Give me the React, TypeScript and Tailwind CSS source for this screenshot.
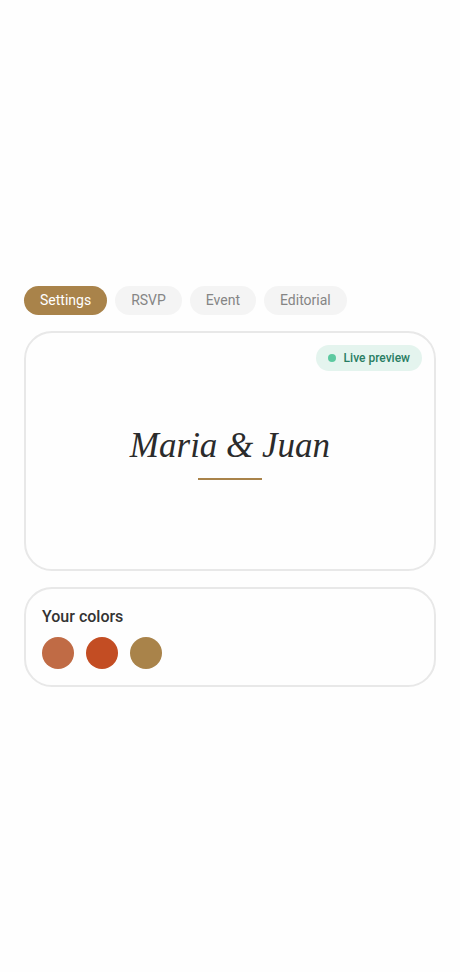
import { useState } from "react";

const tabs = ["Settings", "RSVP", "Event", "Editorial"];

const colors = [
  { name: "Terracotta", fill: "bg-[#c06b45]" },
  { name: "Burnt orange", fill: "bg-[#c34d23]" },
  { name: "Antique gold", fill: "bg-[#a9834a]" },
];

export default function App() {
  const [active, setActive] = useState("Settings");

  return (
    <main className="flex min-h-screen flex-col justify-center gap-4 bg-[#fefefe] px-6 font-['Roboto',sans-serif]">
      <nav className="flex flex-wrap gap-2">
        {tabs.map((tab) => (
          <button
            key={tab}
            type="button"
            aria-pressed={tab === active}
            onClick={() => setActive(tab)}
            className={
              tab === active
                ? "h-[29px] rounded-full bg-[#a9834a] px-4 text-sm text-white"
                : "h-[29px] rounded-full bg-[#f4f4f4] px-4 text-sm text-[#858585]"
            }
          >
            {tab}
          </button>
        ))}
      </nav>

      <section className="relative flex min-h-60 flex-col items-center justify-center gap-2 rounded-[28px] border-2 border-[#e8e8e8]">
        <div className="absolute top-3 right-3 flex h-[26px] items-center gap-2 rounded-full bg-[#e4f4ee] px-3 text-xs font-medium text-[#287d63]">
          <span className="size-2 rounded-full bg-[#5cc9a0]" />
          Live preview
        </div>
        <h1 className="font-['Liberation_Serif',serif] text-[35px] leading-12 text-[#2b2b2b] italic">
          Maria &amp; Juan
        </h1>
        <div className="h-0.5 w-16 bg-[#a9834a]" />
      </section>

      <section className="flex flex-col gap-2 rounded-[28px] border-2 border-[#e8e8e8] p-4">
        <h2 className="text-base font-medium text-[#333333]">Your colors</h2>
        <div className="flex gap-3">
          {colors.map((color) => (
            <button
              key={color.name}
              type="button"
              aria-label={color.name}
              className={`size-8 rounded-full ${color.fill}`}
            />
          ))}
        </div>
      </section>
    </main>
  );
}
